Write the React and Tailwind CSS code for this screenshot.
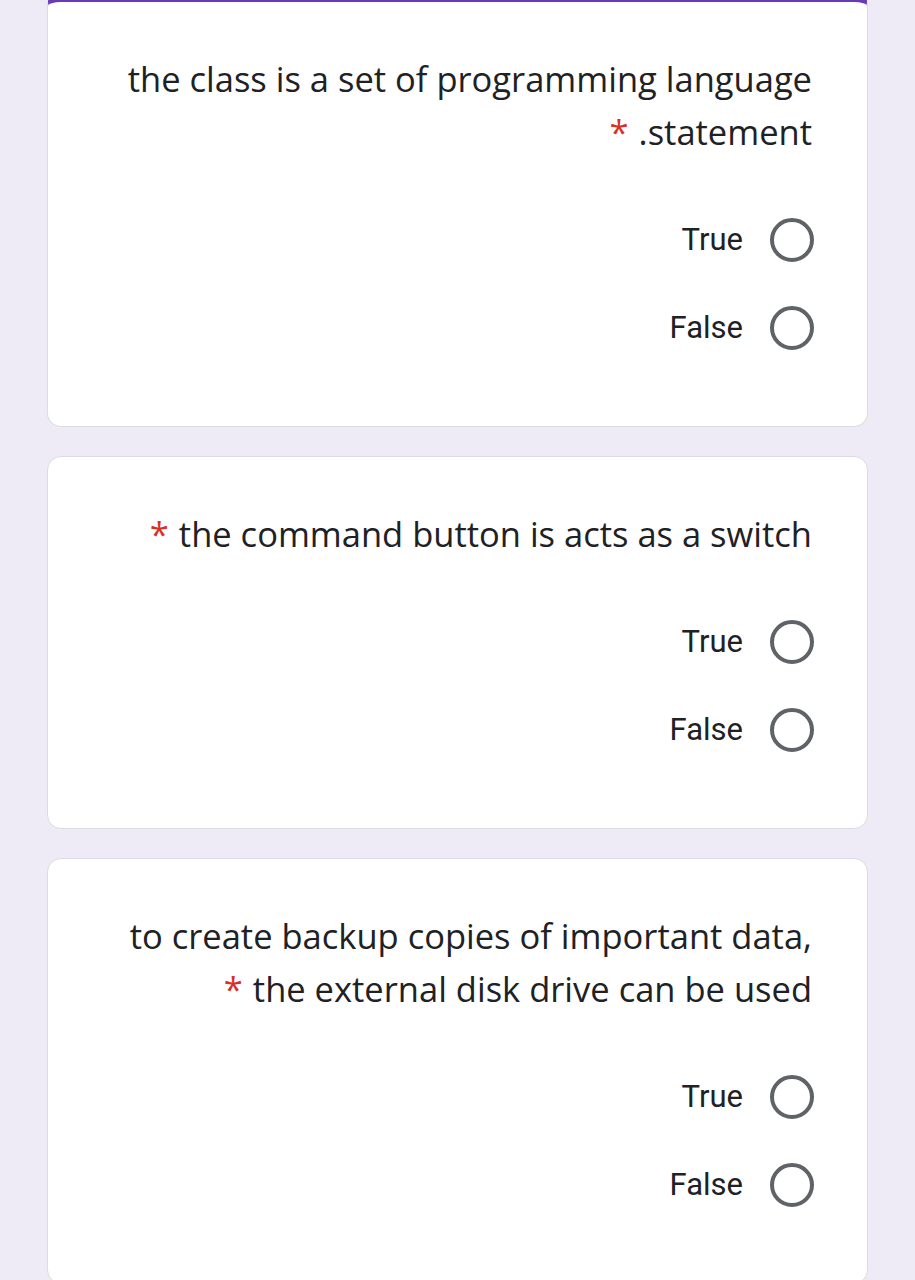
import React from "react";

const questions = [
  {
    lines: ["the class is a set of programming language"],
    last: ".statement",
  },
  {
    lines: [],
    last: "the command button is acts as a switch",
  },
  {
    lines: ["to create backup copies of important data,"],
    last: "the external disk drive can be used",
  },
];

const Radio = () => (
  <span className="block w-[44px] h-[44px] rounded-full border-[4px] border-[#5f6368]" />
);

const Option = ({ label }) => (
  <label className="flex items-center justify-end h-[48px] gap-[27px]">
    <span className="text-[31px] text-[#202124]" style={{ fontFamily: "Roboto, sans-serif" }}>
      {label}
    </span>
    <Radio />
  </label>
);

const QuestionCard = ({ q, first }) => {
  return (
    <div
      className={
        first
          ? "bg-white border border-[#dadce0] border-t-[10px] border-t-[#673ab7] rounded-[14px] -mt-[8px] pt-[50px] pb-[74px] pr-[55px] pl-[20px]"
          : "bg-white border border-[#dadce0] rounded-[14px] pt-[50px] pb-[74px] pr-[55px] pl-[20px]"
      }
    >
      <div
        className="text-right text-[34.5px] leading-[53px] text-[#202124]"
        style={{ fontFamily: "'Open Sans', sans-serif" }}
      >
        {q.lines.map((line, i) => (
          <div key={i}>{line}</div>
        ))}
        <div>
          <span className="text-[#d93025] mr-[10px]">*</span>
          {q.last}
        </div>
      </div>
      <div className="mt-[58px] -mr-[2px] flex flex-col gap-[40px]">
        <Option label="True" />
        <Option label="False" />
      </div>
    </div>
  );
};

export default function App() {
  return (
    <div className="min-h-screen bg-[#eeebf6] px-[47px] flex flex-col gap-[29px] overflow-hidden h-[1280px]">
      {questions.map((q, i) => (
        <QuestionCard key={i} q={q} first={i === 0} />
      ))}
    </div>
  );
}
